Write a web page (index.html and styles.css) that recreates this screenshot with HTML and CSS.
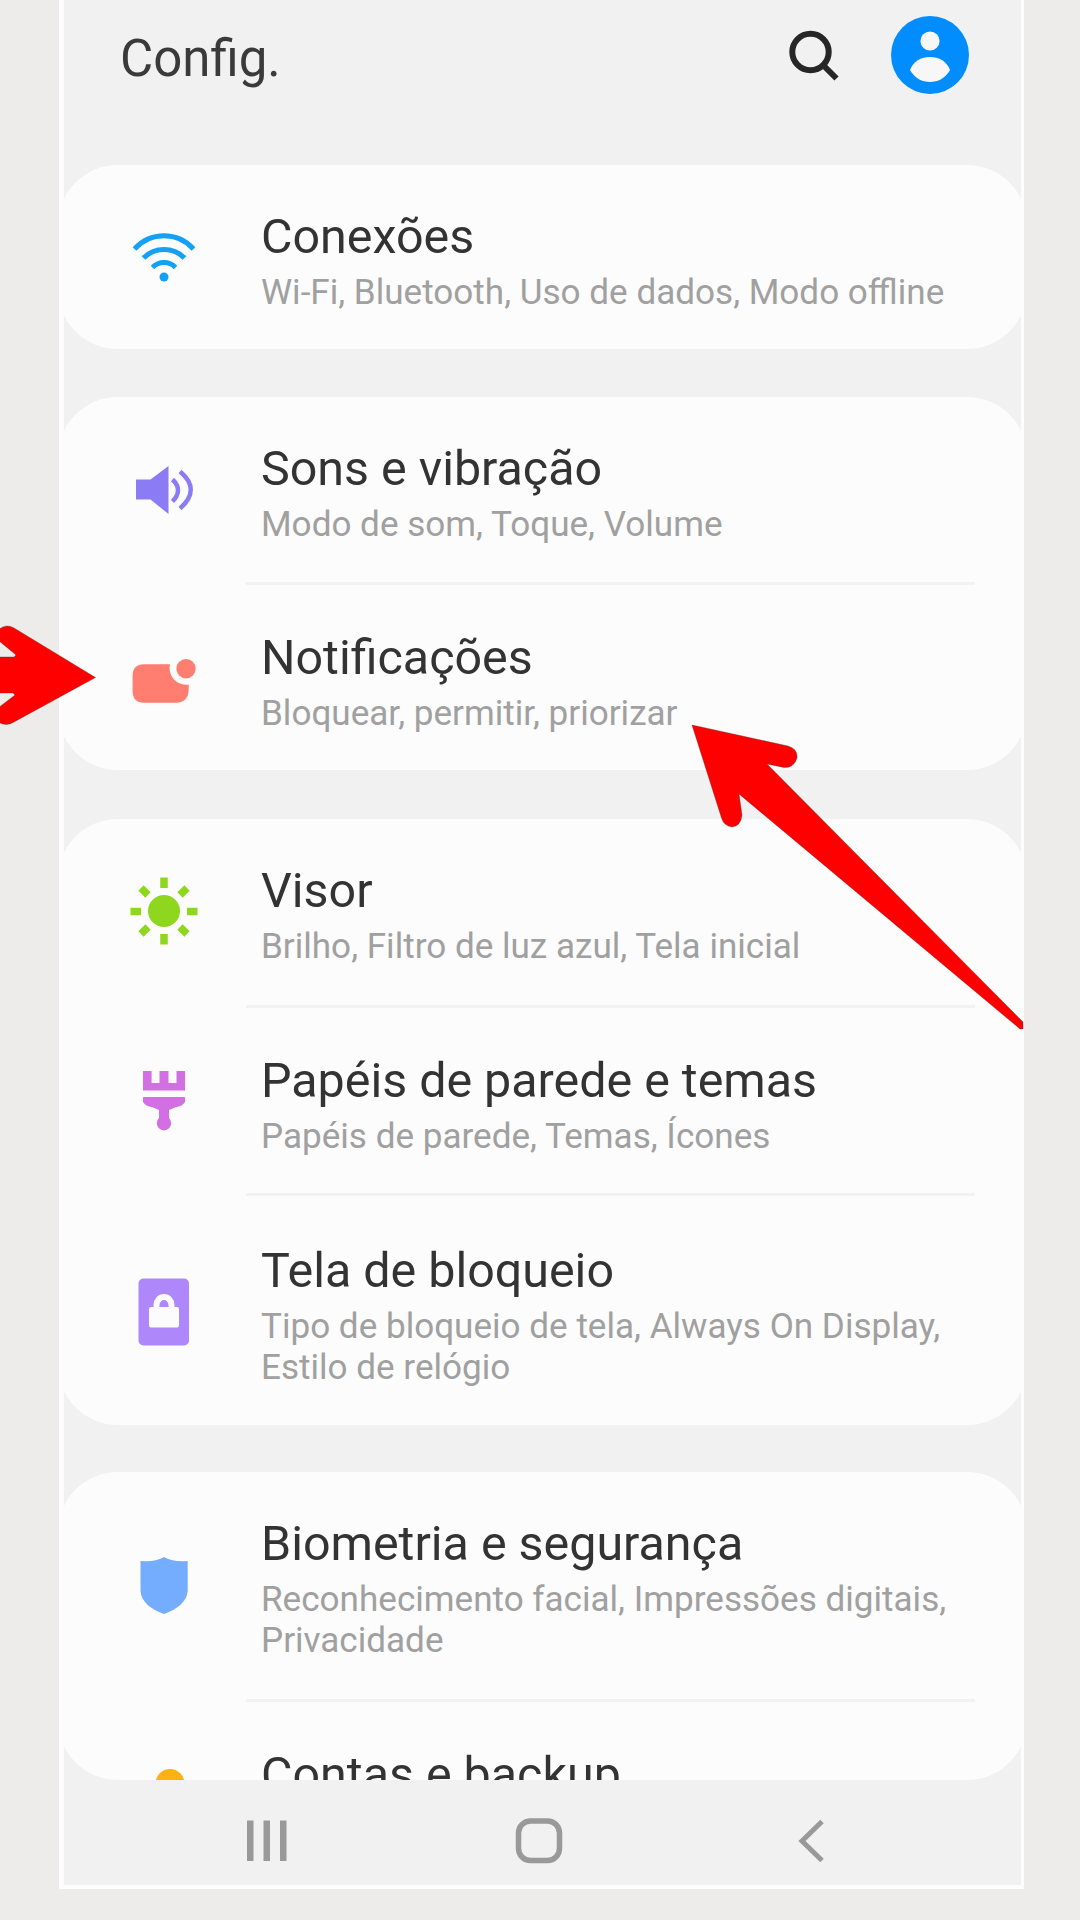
FILE: index.html
```html
<!DOCTYPE html>
<html lang="pt-BR">
<head>
<meta charset="utf-8">
<title>Config.</title>
<link rel="stylesheet" href="styles.css">
</head>
<body>
<main class="phone">
  <header class="header">
    <h1 class="header-title">Config.</h1>
    <svg class="search" viewBox="0 0 52 52" fill="none" stroke="#262626" stroke-width="6"><circle cx="22.500" cy="22" r="18.200"/><path d="M35 35L48.500 48.500"/></svg>
    <svg class="avatar" viewBox="0 0 80 80"><circle cx="40" cy="40" r="39" fill="#028dff"/><circle cx="40" cy="26" r="9.600" fill="#f7f7f7"/><path d="M20 55C23 46.500 31 42 40 42S57 46.500 60 55C55 63.500 48 67 40 67S25 63.500 20 55Z" fill="#f7f7f7"/></svg>
  </header>

  <section class="card card-connections">
    <div class="row">
      <svg class="icon" viewBox="0 0 80 80" fill="none" stroke="#14a0f7" stroke-width="5"><path d="M10.500 32A39.500 39.500 0 0 1 69.500 32M19.500 41A29 29 0 0 1 60.500 41M28.500 50.500A16 16 0 0 1 51.500 50.500"/><circle cx="40" cy="60" r="4.500" fill="#14a0f7" stroke="none"/></svg>
      <div class="text"><h2 class="title">Conexões</h2><p class="sub">Wi-Fi, Bluetooth, Uso de dados, Modo offline</p></div>
    </div>
  </section>

  <section class="card card-sound">
    <div class="row">
      <svg class="icon" viewBox="0 0 80 80"><path d="M12 28.500H26.500L44.500 15V63L26.500 48.500H12Z" fill="#8b7cf5"/><path d="M48.500 28.500Q59.500 39 48.500 50.500M56 20.500Q77.500 38.500 56 57.500" fill="none" stroke="#8b7cf5" stroke-width="4.500"/></svg>
      <div class="text"><h2 class="title">Sons e vibração</h2><p class="sub">Modo de som, Toque, Volume</p></div>
    </div>
    <div class="row">
      <svg class="icon" viewBox="0 0 80 80" fill="#ff7e70"><path d="M20 26.300H46A16.500 16.500 0 0 0 64.700 46.500V51Q64.700 64.700 52 64.700H20Q8.600 64.700 8.600 53V38Q8.600 26.300 20 26.300Z"/><circle cx="62" cy="30.700" r="9.700"/></svg>
      <div class="text"><h2 class="title">Notificações</h2><p class="sub">Bloquear, permitir, priorizar</p></div>
    </div>
  </section>

  <section class="card card-display">
    <div class="row">
      <svg class="icon" viewBox="0 0 80 80" fill="none" stroke="#8fd61e" stroke-width="7.500"><circle cx="40" cy="38" r="16" fill="#8fd61e" stroke="none"/><path d="M40 4.500V15M40 61V71.500M6.500 38.500H17M63 38.500H73.500M17 15L24 22M56 54L63 61M17 61L24 54M56 22L63 15"/></svg>
      <div class="text"><h2 class="title">Visor</h2><p class="sub">Brilho, Filtro de luz azul, Tela inicial</p></div>
    </div>
    <div class="row">
      <svg class="icon" viewBox="0 0 80 80" fill="#d270e3"><path d="M19 10H27.600V22H35.500V10H44.500V22H52.500V10H61V29.500H19Z"/><path d="M19 36H61V41Q59 45 51 46.500L45 49V57A7.200 7.200 0 1 1 35 57V49L29 46.500Q21 45 19 41Z"/></svg>
      <div class="text"><h2 class="title">Papéis de parede e temas</h2><p class="sub">Papéis de parede, Temas, Ícones</p></div>
    </div>
    <div class="row row-tall">
      <svg class="icon" viewBox="0 0 80 80"><rect x="14.500" y="8.500" width="50.500" height="67" rx="5" fill="#ae87fb"/><rect x="25" y="37" width="30" height="20.500" rx="2" fill="#fcfcfc"/><path d="M32.500 39V35A7.500 8 0 0 1 47.500 35V39" fill="none" stroke="#fcfcfc" stroke-width="6"/></svg>
      <div class="text text-low"><h2 class="title">Tela de bloqueio</h2><p class="sub">Tipo de bloqueio de tela, Always On Display,<br>Estilo de relógio</p></div>
    </div>
  </section>

  <section class="card card-security">
    <div class="row row-tall">
      <svg class="icon" viewBox="0 0 80 80"><path d="M40 10Q47 15 63.700 14V44C63 55 52 63 40 67C28 63 17 55 16.500 44V14Q33 15 40 10Z" fill="#74adfd"/></svg>
      <div class="text"><h2 class="title">Biometria e segurança</h2><p class="sub">Reconhecimento facial, Impressões digitais,<br>Privacidade</p></div>
    </div>
    <div class="row">
      <svg class="icon" viewBox="0 0 80 80"><circle cx="46" cy="28.500" r="14.500" fill="#ffb114"/></svg>
      <div class="text"><h2 class="title">Contas e backup</h2></div>
    </div>
  </section>

  <nav class="nav">
    <svg class="nav-icon" viewBox="0 0 52 52" fill="#999"><path d="M6 6.500H12.500V47H6ZM22.500 6.500H29V47H22.500ZM39 6.500H45.500V47H39Z"/></svg>
    <svg class="nav-icon" viewBox="0 0 52 52" fill="none" stroke="#999" stroke-width="5.500"><rect x="5.500" y="7" width="41" height="39.500" rx="12"/></svg>
    <svg class="nav-icon" viewBox="0 0 52 52" fill="none" stroke="#999" stroke-width="5"><path d="M37 7.500L17 27L37 46.500"/></svg>
  </nav>
</main>

<svg class="arrows" viewBox="0 0 1080 1920" fill="#f00" stroke="#4a3030" stroke-opacity=".35" stroke-width="1">
  <path d="M95.500 677.500L14 628Q6 623 -2 630V640L16 655L14 657H-2V693H13L15 695L-2 708V722Q6 727 14 722Z"/>
  <path d="M692 725L788 746Q798 749 797 758Q794 768 784 767.500L767 764L1023 1022V1029H1020L739 794L742 815Q741 826 732 827Q724 826 721.500 818Z"/>
</svg>
</body>
</html>
```
FILE: styles.css
```css
* { box-sizing: border-box; margin: 0; padding: 0; }

body {
  position: relative;
  width: 1080px;
  height: 1920px;
  overflow: hidden;
  background: #edecea;
  font-family: Roboto, "Liberation Sans", sans-serif;
}

.phone {
  display: flex;
  flex-direction: column;
  width: 965px;
  height: 1889px;
  margin-left: 59px;
  border: solid #fdfdfd;
  border-width: 0 3px 4px 5px;
  background: #f1f1f1;
  overflow: hidden;
}

.header {
  display: flex;
  align-items: flex-start;
  height: 165px;
  flex: none;
  padding: 15px 51px 0 56px;
}

.header-title {
  flex: 1;
  margin-top: 14px;
  font-size: 51px;
  font-weight: 400;
  line-height: 60px;
  color: #3a3a3a;
}

.search { width: 52px; height: 52px; margin: 15px 50px 0 0; }
.avatar { width: 80px; height: 80px; }

.card {
  flex: none;
  margin: 0 -6px;
  border-radius: 60px;
  background: #fcfcfc;
  overflow: hidden;
}

.card-connections { height: 184px; margin-bottom: 48px; }
.card-sound { height: 373px; margin-bottom: 49px; }
.card-display { height: 606px; margin-bottom: 47px; }
.card-security { height: 308px; }

.row {
  position: relative;
  display: flex;
  align-items: center;
  height: 188px;
  padding-left: 66px;
}

.card-connections .row { height: 184px; }
.card-sound .row { height: 187px; }
.row.row-tall { height: 229px; }

.row + .row::before {
  content: "";
  position: absolute;
  top: -2px;
  left: 188px;
  width: 729px;
  height: 3px;
  background: #f2f2f2;
}

.icon { flex: none; width: 80px; height: 80px; }

.text {
  align-self: flex-start;
  margin-left: 57px;
  padding-top: 43.5px;
  white-space: nowrap;
}

.row + .row .text { padding-top: 46px; }
.row + .row .text-low { padding-top: 48px; }

.title {
  font-size: 48.4px;
  font-weight: 400;
  line-height: 56px;
  color: #333;
}

.sub {
  margin-top: 7px;
  font-size: 35.1px;
  line-height: 41px;
  color: #a0a0a0;
}

.nav {
  display: flex;
  align-items: center;
  gap: 220px;
  height: 105px;
  padding: 15px 0 0 177px;
}

.nav-icon { width: 52px; height: 52px; }

.arrows {
  position: absolute;
  top: 0;
  left: 0;
  width: 1080px;
  height: 1920px;
  pointer-events: none;
}
```
